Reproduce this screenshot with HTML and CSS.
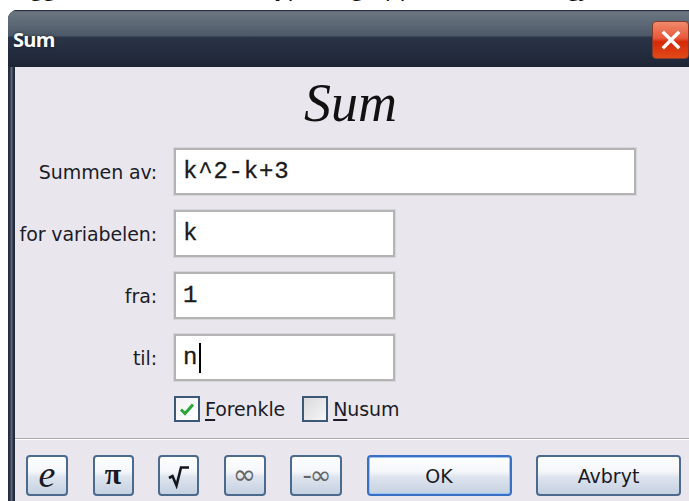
FILE: index.html
```html
<!DOCTYPE html>
<html lang="no">
<head>
<meta charset="utf-8">
<title>Sum</title>
<link rel="stylesheet" href="styles.css">
</head>
<body>
<div class="doc-strip"><span class="doc-line">Legg merke til hvordan typen og oppsettet brukes gjennom denne dialogen og i hjelpen</span></div>
<div class="window">
  <div class="titlebar">
    <span class="title">Sum</span>
    <span class="close">
      <svg width="22" height="22" viewBox="0 0 22 22"><path d="M4 4 L18 18 M18 4 L4 18" stroke="#fff" stroke-width="3.4" stroke-linecap="square"/></svg>
    </span>
  </div>
  <div class="frame">
    <div class="client">
      <h1 class="heading">Sum</h1>
      <div class="form">
        <label class="lbl">Summen av:</label>
        <div class="field wide">k^2-k+3</div>
        <label class="lbl">for variabelen:</label>
        <div class="field">k</div>
        <label class="lbl">fra:</label>
        <div class="field">1</div>
        <label class="lbl">til:</label>
        <div class="field">n<span class="caret"></span></div>
        <span></span>
        <div class="checks">
          <span class="check">
            <span class="box on"><svg width="18" height="18" viewBox="0 0 18 18"><path d="M3 9.5 L7 13.5 L15 4.5" fill="none" stroke="#2aa63a" stroke-width="3"/></svg></span>
            <span class="clabel"><u>F</u>orenkle</span>
          </span>
          <span class="check">
            <span class="box"></span>
            <span class="clabel"><u>N</u>usum</span>
          </span>
        </div>
      </div>
      <div class="sep"></div>
      <div class="buttons">
        <button class="btn sym e">e</button>
        <button class="btn sym pi">π</button>
        <button class="btn sym sqrt"><svg width="26" height="26" viewBox="0 0 26 26"><path d="M3 15 L6.5 13 L10.5 22.5 L15 4.5 L23 4.5" fill="none" stroke="#15151e" stroke-width="2.6" stroke-linejoin="miter"/></svg></button>
        <button class="btn sym inf">∞</button>
        <button class="btn sym ninf">-∞</button>
        <button class="btn text default">OK</button>
        <button class="btn text">Avbryt</button>
      </div>
    </div>
  </div>
</div>
</body>
</html>
```
FILE: styles.css
```css
html, body {
  margin: 0;
  padding: 0;
  background: #ffffff;
  overflow: hidden;
}

body {
  width: 689px;
  height: 501px;
  font-family: "DejaVu Sans", Verdana, sans-serif;
}

/* line of page text above the dialog; only its descenders show */
.doc-strip {
  height: 10px;
  overflow: hidden;
  white-space: nowrap;
  display: flex;
  align-items: flex-end;
}
.doc-line {
  display: block;
  font-family: "Open Sans", sans-serif;
  font-size: 24px;
  line-height: 24px;
  margin-bottom: 12px;
  margin-left: 4px;
  color: #111;
}

.window {
  margin-left: 8px;
  width: 700px;
  border-radius: 9px 0 0 0;
  overflow: hidden;
  background: #1f2637;
}

.titlebar {
  height: 57px;
  display: flex;
  align-items: center;
  justify-content: space-between;
  background: linear-gradient(#3b4656 0px, #6a7580 2px, #5c6875 14px, #4c5866 26px, #2b3548 27px, #222b3d 45px, #1e2535 57px);
  box-shadow: inset 0 1px 0 #27303f;
}
.title {
  margin-left: 5px;
  margin-top: 2px;
  color: #fff;
  font-family: "Open Sans", sans-serif;
  font-weight: 700;
  font-size: 20px;
  letter-spacing: -0.7px;
  text-shadow: 0 0 3px rgba(0,0,0,0.6);
}
.close {
  width: 37px;
  height: 38px;
  margin-right: 19px;
  margin-top: 3px;
  border-radius: 4px;
  border: 1px solid #8a3a2a;
  background: linear-gradient(#f08a6a 0%, #e8583a 45%, #d42a08 55%, #e24a18 100%);
  display: flex;
  align-items: center;
  justify-content: center;
  box-sizing: border-box;
}

.frame {
  padding-left: 7px;
  background: linear-gradient(90deg, #222a3a 0px, #2a3345 2px, #5b6674 3px, #5b6674 4px, #2a3345 5px, #1f2637 7px);
}
.client {
  background: #e9e7ed;
  height: 434px;
}

.heading {
  margin: 0;
  padding-top: 3px;
  height: 81px;
  text-align: center;
  font-family: "Liberation Serif", "Times New Roman", serif;
  font-style: italic;
  font-weight: 400;
  font-size: 54px;
  line-height: 66px;
  color: #111;
  box-sizing: border-box;
  padding-right: 22px;
}

.form {
  display: grid;
  grid-template-columns: 142px 462px;
  column-gap: 17px;
  row-gap: 15px;
  align-items: center;
}
.lbl {
  text-align: right;
  font-size: 19px;
  color: #1c1c28;
  white-space: nowrap;
  letter-spacing: -0.1px;
}
.field {
  width: 221px;
  height: 47px;
  box-sizing: border-box;
  border: 2px solid #b4b4b4;
  box-shadow: 0 0 0 1px #d6d5da;
  background: #ffffff;
  font-family: "Liberation Mono", "Courier New", monospace;
  font-size: 24px;
  font-weight: 400;
  color: #1a1a1a;
  padding-left: 7px;
  line-height: 43px;
  display: flex;
  align-items: center;
  letter-spacing: 0.8px;
  -webkit-text-stroke: 0.3px #1a1a1a;
}
.field.wide {
  width: 462px;
}
.caret {
  display: inline-block;
  width: 2px;
  height: 30px;
  background: #000;
  margin-left: 1px;
}

.checks {
  display: flex;
  align-items: center;
  gap: 17px;
  height: 26px;
}
.check {
  display: flex;
  align-items: center;
  gap: 5px;
}
.box {
  width: 26px;
  height: 26px;
  box-sizing: border-box;
  border: 2px solid #3b5877;
  background: linear-gradient(135deg, #d9d9dc, #f6f6f8);
  display: flex;
  align-items: center;
  justify-content: center;
}
.box.on {
  background: linear-gradient(135deg, #f2f2f4, #ffffff);
}
.clabel {
  font-size: 19px;
  color: #1c1c28;
  letter-spacing: -0.1px;
}
.clabel u {
  text-decoration-thickness: 2px;
  text-underline-offset: 3px;
}

.sep {
  margin-top: 16px;
  height: 1px;
  background: #a9a8ad;
  border-bottom: 1px solid #ffffff;
}

.buttons {
  display: flex;
  gap: 24.5px;
  padding-left: 11px;
  margin-top: 15px;
}
.btn {
  height: 41px;
  box-sizing: border-box;
  border: 2px solid #4c6a8e;
  border-radius: 4px;
  background: linear-gradient(#ffffff 0%, #f4f6fa 40%, #dde4ee 55%, #c5d1e1 100%);
  padding: 0;
  display: flex;
  align-items: center;
  justify-content: center;
  color: #1a1a24;
}
.btn.text {
  width: 145px;
  font-family: "DejaVu Sans", Verdana, sans-serif;
  font-size: 19px;
}
.btn.default {
  border-color: #3a70c4;
  box-shadow: inset 0 0 0 1px #9cc4f0;
}
.sym { width: 41px; }
.e {
  width: 42px;
  font-family: "Liberation Serif", serif;
  font-style: italic;
  font-size: 38px;
  padding-bottom: 4px;
}
.pi {
  font-family: "Liberation Serif", serif;
  font-weight: 700;
  font-size: 30px;
  padding-bottom: 3px;
}
.inf {
  width: 42px;
  font-family: "DejaVu Sans", sans-serif;
  font-size: 28px;
  color: #666;
  padding-bottom: 2px;
}
.ninf {
  width: 52px;
  font-family: "DejaVu Sans", sans-serif;
  font-size: 26px;
  color: #666;
  letter-spacing: -2px;
  padding-bottom: 2px;
}
```
